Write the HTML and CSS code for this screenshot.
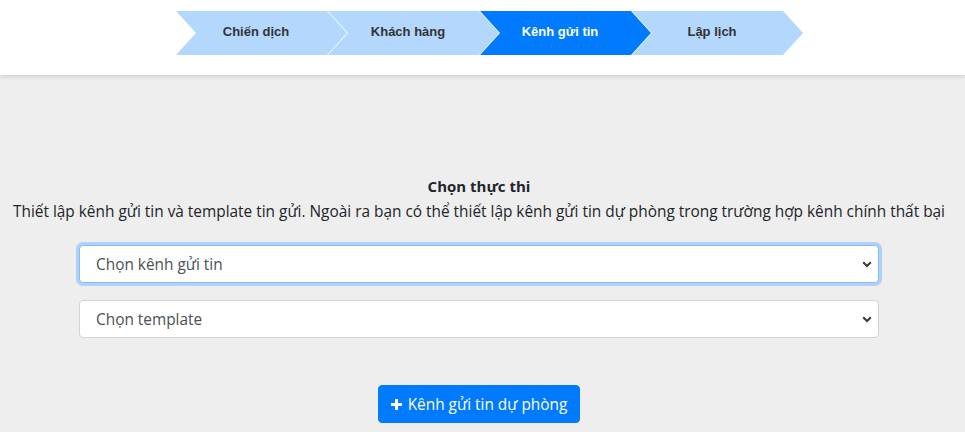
FILE: index.html
```html
<!DOCTYPE html>
<html lang="vi">
<head>
<meta charset="utf-8">
<title>Chọn thực thi</title>
<link rel="stylesheet" href="styles.css">
</head>
<body>
<header class="topbar">
  <nav class="steps">
    <div class="step">Chiến dịch</div>
    <div class="step">Khách hàng</div>
    <div class="step active">Kênh gửi tin</div>
    <div class="step">Lập lịch</div>
  </nav>
</header>
<main class="content">
  <h2 class="title">Chọn thực thi</h2>
  <p class="desc">Thiết lập kênh gửi tin và template tin gửi. Ngoài ra bạn có thể thiết lập kênh gửi tin dự phòng trong trường hợp kênh chính thất bại</p>
  <div class="fields">
    <div class="select focused">
      <span>Chọn kênh gửi tin</span>
      <svg class="chev" width="10" height="7" viewBox="0 0 10 7"><polyline points="1.2,1.2 5,5 8.8,1.2" fill="none" stroke="#343a40" stroke-width="2"/></svg>
    </div>
    <div class="select">
      <span>Chọn template</span>
      <svg class="chev" width="10" height="7" viewBox="0 0 10 7"><polyline points="1.2,1.2 5,5 8.8,1.2" fill="none" stroke="#343a40" stroke-width="2"/></svg>
    </div>
  </div>
  <button class="btn" type="button">
    <svg class="plus" width="11" height="11" viewBox="0 0 11 11"><path d="M4 0h3v4h4v3H7v4H4V7H0V4h4z" fill="#fff"/></svg>
    <span>Kênh gửi tin dự phòng</span>
  </button>
</main>
</body>
</html>
```
FILE: styles.css
```css
* { box-sizing: border-box; }
html, body { margin: 0; padding: 0; }
body {
  background: #eeeeee;
  font-family: "Open Sans", "Noto Sans", sans-serif;
  color: #212529;
  width: 965px;
  height: 432px;
  overflow: hidden;
}
.topbar {
  background: #fff;
  height: 75px;
  padding-top: 11px;
  box-shadow: 0 2px 4px rgba(0,0,0,0.12);
  position: relative;
}
.steps {
  display: flex;
  padding-left: 176px;
}
.step {
  width: 171px;
  height: 44px;
  background: #b3d7fd;
  color: #333;
  font-family: "Liberation Sans", Arial, sans-serif;
  font-weight: bold;
  font-size: 13px;
  display: flex;
  align-items: center;
  justify-content: center;
  padding: 0 11px 3px 0;
  clip-path: polygon(0 0, 151px 0, 100% 50%, 151px 100%, 0 100%, 20px 50%);
}
.step + .step { margin-left: -19px; }
.step.active { background: #007bff; color: #fff; }
.content {
  width: 958px;
  padding-top: 99px;
  display: flex;
  flex-direction: column;
  align-items: center;
}
.title {
  margin: 0;
  font-size: 15px;
  font-weight: 700;
  line-height: 24px;
}
.desc {
  margin: 2px 0 0;
  font-size: 15.4px;
  line-height: 24px;
  white-space: nowrap;
}
.fields {
  width: 800px;
  margin-top: 21px;
  display: flex;
  flex-direction: column;
  gap: 17px;
}
.select {
  height: 38px;
  background: #fff;
  border: 1px solid #ced4da;
  border-radius: 4px;
  display: flex;
  align-items: center;
  justify-content: space-between;
  padding: 0 6px 0 16px;
  font-size: 15.4px;
  color: #495057;
}
.select.focused {
  border-color: #80bdff;
  box-shadow: 0 0 0 3px rgba(0,123,255,0.25);
}
.btn {
  margin-top: 47px;
  height: 38px;
  padding: 0 12px;
  background: #007bff;
  border: 1px solid #007bff;
  border-radius: 4px;
  color: #fff;
  font-family: inherit;
  font-size: 15.4px;
  display: flex;
  align-items: center;
  gap: 6px;
}
```
